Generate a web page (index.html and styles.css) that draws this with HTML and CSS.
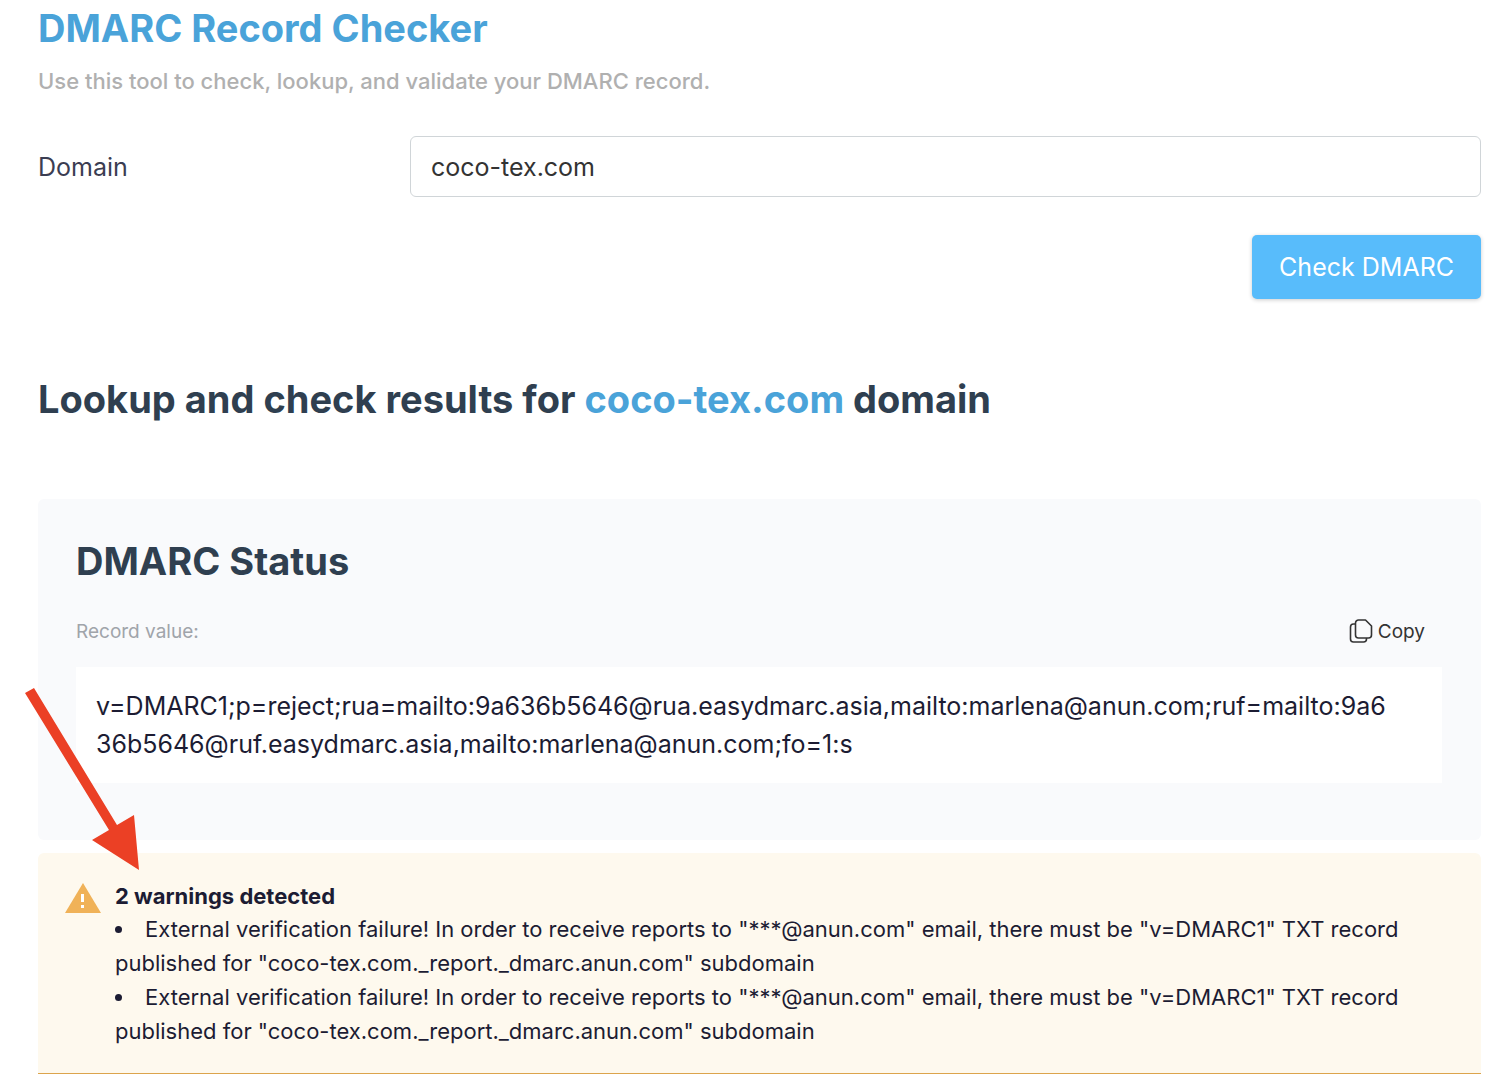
FILE: index.html
```html
<!DOCTYPE html>
<html lang="en">
<head>
<meta charset="utf-8">
<title>DMARC Record Checker</title>
<link rel="stylesheet" href="styles.css">
</head>
<body>
<main class="page">
  <header class="intro">
    <h1 class="title">DMARC Record Checker</h1>
    <p class="subtitle">Use this tool to check, lookup, and validate your DMARC record.</p>
  </header>
  <form class="checker">
    <div class="field">
      <label class="field-label" for="domain">Domain</label>
      <input class="field-input" id="domain" type="text" value="coco-tex.com">
    </div>
    <button class="submit" type="button">Check DMARC</button>
  </form>
  <h2 class="results-title">Lookup and check results for <span class="accent">coco-tex.com</span> domain</h2>
  <section class="status">
    <h2 class="status-title">DMARC Status</h2>
    <div class="record-bar">
      <span class="record-label">Record value:</span>
      <button class="copy" type="button">
        <svg class="copy-icon" viewBox="0 0 24 24" fill="none" stroke="currentColor" stroke-width="1.6" stroke-linejoin="round" aria-hidden="true">
          <path d="M9.500 1h7l6 6v9a3 3 0 0 1-3 3h-10a3 3 0 0 1-3-3V4a3 3 0 0 1 3-3Z"/>
          <path d="M6.500 5H4.500a3 3 0 0 0-3 3v12a3 3 0 0 0 3 3h10a3 3 0 0 0 3-3v-1"/>
        </svg>
        Copy
      </button>
    </div>
    <p class="record">v=DMARC1;p=reject;rua=mailto:9a636b5646@rua.easydmarc.asia,mailto:marlena@anun.com;ruf=mailto:9a636b5646@ruf.easydmarc.asia,mailto:marlena@anun.com;fo=1:s</p>
  </section>
  <section class="warnings">
    <svg class="warning-icon" viewBox="0 0 36 30" aria-hidden="true">
      <path d="M18 0 36 30H0Z" fill="#f0b258"/>
      <path d="M16 11h3v8h-3zM16 22h3v3h-3z" fill="#fff"/>
    </svg>
    <div class="warnings-body">
      <h3 class="warnings-title">2 warnings detected</h3>
      <ul class="warnings-list">
        <li>External verification failure! In order to receive reports to "***@anun.com" email, there must be "v=DMARC1" TXT record published for "coco-tex.com._report._dmarc.anun.com" subdomain</li>
        <li>External verification failure! In order to receive reports to "***@anun.com" email, there must be "v=DMARC1" TXT record published for "coco-tex.com._report._dmarc.anun.com" subdomain</li>
      </ul>
    </div>
    <svg class="arrow" viewBox="0 0 116 184" aria-hidden="true">
      <path d="M9 1 92 138 109 128 114 183 67 153 84 143 0 6Z" fill="#eb4025"/>
    </svg>
  </section>
</main>
</body>
</html>
```
FILE: styles.css
```css
*{box-sizing:border-box}
body{margin:0;background:#fff;color:#1c1c33;font-family:Inter,"Liberation Sans",sans-serif}
h1,h2,h3,p,ul{margin:0}
.page{padding:4px 5px 6px 38px}
.title{color:#4aa3d9;font-size:38px;line-height:48px;font-weight:700}
.subtitle{margin-top:12px;color:#b0b0b0;font-size:22px;line-height:34px;font-weight:500}
.checker{display:flex;flex-direction:column;align-items:flex-end;gap:38px;margin-top:38px}
.field{display:flex;align-items:center;width:100%}
.field-label{flex:0 0 372px;color:#3b3d52;font-size:25px}
.field-input{flex:1;min-width:0;height:61px;padding:0 20px;border:1px solid #d0d5d8;border-radius:6px;background:#fff;color:#333;font:400 25px Inter,"Liberation Sans",sans-serif}
.submit{height:64px;padding:0 27px;border:0;border-radius:5px;background:#58bcfb;color:#fff;font:400 25px Inter,"Liberation Sans",sans-serif;box-shadow:0 1px 4px #0003}
.results-title{margin-top:75px;color:#2f3f50;font-size:38px;line-height:50px;font-weight:700}
.accent{color:#4aa3d9}
.status{margin-top:75px;padding:37px 39px 57px 38px;border-radius:6px;background:#f9fafc}
.status-title{color:#2f3f50;font-size:38px;line-height:50px;font-weight:700}
.record-bar{display:flex;justify-content:space-between;align-items:center;height:36px;margin:27px 17px 18px 0}
.record-label{color:#a0a4aa;font-size:19px}
.copy{display:flex;align-items:center;gap:5px;padding:0;border:0;background:none;color:#333;font:400 19px Inter,"Liberation Sans",sans-serif}
.copy-icon{width:24px;height:24px}
.record{padding:20px 50px 20px 20px;background:#fff;font-size:25px;line-height:38px;word-break:break-all}
.warnings{position:relative;display:flex;gap:14px;margin-top:13px;padding:27px 27px 25px;border-bottom:1px solid #dca44c;border-radius:6px 6px 0 0;background:#fef9ee}
.warning-icon{flex:none;width:36px;height:30px;margin-top:3px}
.warnings-title{font-size:22px;line-height:32px;font-weight:700}
.warnings-list{padding:0;font-size:22px;line-height:34px;list-style-position:inside}
.arrow{position:absolute;left:-13px;top:-166px;width:116px;height:184px}
```
